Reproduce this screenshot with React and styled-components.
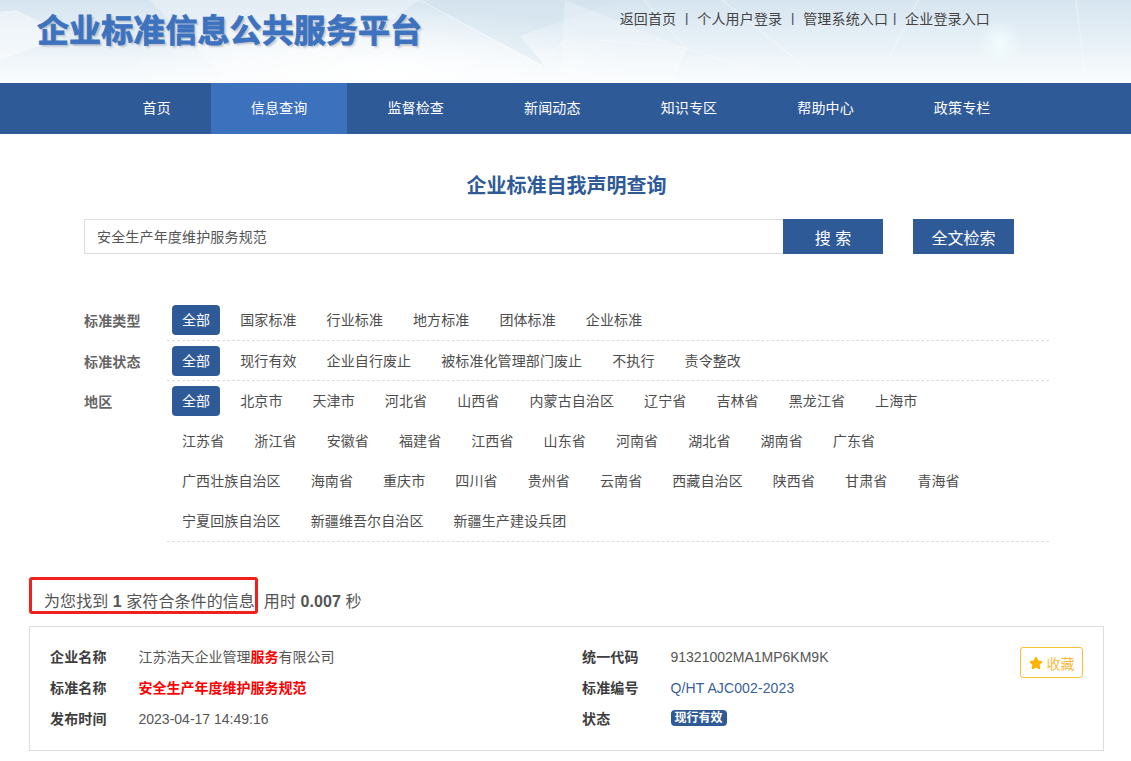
import styled, { createGlobalStyle } from "styled-components";
import { FaStar } from "react-icons/fa";

const GlobalStyle = createGlobalStyle`
  html, body { margin: 0; padding: 0; background: #fff; }
  body {
    font-family: "Liberation Sans", "Noto Sans CJK SC", sans-serif;
    font-size: 14px;
    letter-spacing: 0.15px;
    color: #555;
  }
  * { box-sizing: border-box; }
`;

const navItems = ["首页", "信息查询", "监督检查", "新闻动态", "知识专区", "帮助中心", "政策专栏"];

const filterGroups = [
  { label: "标准类型", lines: [["全部", "国家标准", "行业标准", "地方标准", "团体标准", "企业标准"]] },
  { label: "标准状态", short: true, lines: [["全部", "现行有效", "企业自行废止", "被标准化管理部门废止", "不执行", "责令整改"]] },
  {
    label: "地区",
    lines: [
      ["全部", "北京市", "天津市", "河北省", "山西省", "内蒙古自治区", "辽宁省", "吉林省", "黑龙江省", "上海市"],
      ["江苏省", "浙江省", "安徽省", "福建省", "江西省", "山东省", "河南省", "湖北省", "湖南省", "广东省"],
      ["广西壮族自治区", "海南省", "重庆市", "四川省", "贵州省", "云南省", "西藏自治区", "陕西省", "甘肃省", "青海省"],
      ["宁夏回族自治区", "新疆维吾尔自治区", "新疆生产建设兵团"],
    ],
  },
];

function HeaderArt() {
  return (
    <Art viewBox="0 0 1131 83" preserveAspectRatio="none">
      <defs>
        <radialGradient id="glow">
          <stop offset="0%" stopColor="#f2fdfd" stopOpacity="0.95" />
          <stop offset="100%" stopColor="#f2fdfd" stopOpacity="0" />
        </radialGradient>
      </defs>
      <polygon points="420,0 620,0 520,36 545,66" fill="#cfe0ec" opacity="0.35" />
      <polygon points="0,12 15,10 70,35 0,60" fill="#fff" opacity="0.45" />
      <polygon points="150,0 420,0 300,83 230,83" fill="#fff" opacity="0.3" />
      <polygon points="565,0 686,48 671,83 560,83" fill="#fff" opacity="0.25" />
      <g stroke="#fff" strokeWidth="1.2" fill="none" opacity="0.4">
        <path d="M420 0 L541 66 L565 40" />
        <path d="M644 0 L686 48 L671 83" />
        <path d="M600 40 L686 48 L790 83" />
        <path d="M722 0 L803 65" />
        <path d="M918 0 L888 60" />
        <path d="M1076 0 L1086 83" />
      </g>
      <circle cx="1000" cy="44" r="22" fill="url(#glow)" />
    </Art>
  );
}

export default function App() {
  return (
    <>
      <GlobalStyle />
      <Header>
        <HeaderArt />
        <Logo>企业标准信息公共服务平台</Logo>
        <TopLinks>
          <TopLink>返回首页</TopLink>
          <Sep>|</Sep>
          <TopLink>个人用户登录</TopLink>
          <Sep>|</Sep>
          <TopLink>管理系统入口</TopLink>
          <Sep $tight>|</Sep>
          <TopLink>企业登录入口</TopLink>
        </TopLinks>
      </Header>

      <Nav>
        {navItems.map((item) => (
          <NavItem key={item} $active={item === "信息查询"}>{item}</NavItem>
        ))}
      </Nav>

      <Main>
        <Title>企业标准自我声明查询</Title>
        <SearchBar>
          <SearchInput defaultValue="安全生产年度维护服务规范" />
          <SearchButton>搜 索</SearchButton>
          <FullTextButton>全文检索</FullTextButton>
        </SearchBar>

        <Filters>
          {filterGroups.map((group) => (
            <FilterRow key={group.label}>
              <FilterLabel>{group.label}</FilterLabel>
              <FilterBody>
                {group.lines.map((line) => (
                  <FilterLine key={line[0] + line[1]} $short={group.short}>
                    {line.map((opt) => (
                      <Option key={opt} $active={opt === "全部"}>{opt}</Option>
                    ))}
                  </FilterLine>
                ))}
              </FilterBody>
            </FilterRow>
          ))}
        </Filters>

        <ResultLine>
          <Highlight />
          为您找到 <b>1</b> 家符合条件的信息 &nbsp;用时 <b>0.007</b> 秒
        </ResultLine>

        <Card>
          <CardColumn>
            <InfoRow>
              <InfoLabel>企业名称</InfoLabel>
              <InfoValue>江苏浩天企业管理<Red>服务</Red>有限公司</InfoValue>
            </InfoRow>
            <InfoRow>
              <InfoLabel>标准名称</InfoLabel>
              <InfoValue><Red>安全生产年度维护服务规范</Red></InfoValue>
            </InfoRow>
            <InfoRow>
              <InfoLabel>发布时间</InfoLabel>
              <InfoValue $latin>2023-04-17 14:49:16</InfoValue>
            </InfoRow>
          </CardColumn>
          <CardColumn>
            <InfoRow>
              <InfoLabel>统一代码</InfoLabel>
              <InfoValue $latin>91321002MA1MP6KM9K</InfoValue>
            </InfoRow>
            <InfoRow>
              <InfoLabel>标准编号</InfoLabel>
              <InfoValue $latin $link>Q/HT AJC002-2023</InfoValue>
            </InfoRow>
            <InfoRow>
              <InfoLabel>状态</InfoLabel>
              <Badge>现行有效</Badge>
            </InfoRow>
          </CardColumn>
          <Collect><FaStar size={14} color="#fdb400" />收藏</Collect>
        </Card>
      </Main>
    </>
  );
}

const Header = styled.header`
  position: relative;
  height: 83px;
  display: flex;
  justify-content: space-between;
  align-items: flex-start;
  padding: 0 141px 0 37px;
  overflow: hidden;
  background:
    radial-gradient(ellipse 260px 70px at 380px 75px, #fff 0%, rgba(255, 255, 255, 0) 100%),
    linear-gradient(180deg, #d7e5f0 0%, #e5eff6 45%, #fbfdfe 100%);
`;

const Art = styled.svg`
  position: absolute;
  left: 0;
  top: 0;
  width: 100%;
  height: 100%;
`;

const Logo = styled.h1`
  position: relative;
  margin: 12px 0 0;
  font-size: 32px;
  line-height: 38px;
  font-weight: 700;
  letter-spacing: 0.1px;
  color: #3d72bf;
  -webkit-text-stroke: 0.8px #3d72bf;
  text-shadow: 2px 2px 2px rgba(60, 70, 90, 0.28);
  white-space: nowrap;
`;

const TopLinks = styled.div`
  position: relative;
  display: flex;
  align-items: center;
  height: 35px;
  color: #444;
`;

const TopLink = styled.a`
  color: #444;
  cursor: pointer;
`;

const Sep = styled.span`
  width: ${(p) => (p.$tight ? "17px" : "21px")};
  padding-left: ${(p) => (p.$tight ? "5px" : "0")};
  text-align: ${(p) => (p.$tight ? "left" : "center")};
  font-size: 13px;
  color: #445;
`;

const Nav = styled.nav`
  display: flex;
  height: 51px;
  padding-left: 102.5px;
  background: #2f5a98;
`;

const NavItem = styled.a`
  padding: 0 40px;
  line-height: 51px;
  font-size: 14px;
  color: #fff;
  background: ${(p) => (p.$active ? "#3c71bd" : "transparent")};
  cursor: pointer;
`;

const Main = styled.main`
  padding: 37px 27px 10px 29px;
`;

const Title = styled.h2`
  margin: 0;
  font-size: 20px;
  line-height: 30px;
  font-weight: 700;
  letter-spacing: 0;
  color: #2f5a98;
  text-align: center;
`;

const SearchBar = styled.div`
  display: flex;
  height: 35px;
  margin: 18px 0 0 55px;
`;

const SearchInput = styled.input`
  width: 699px;
  height: 35px;
  padding: 0 12px 2px;
  border: 1px solid #ddd;
  border-right: none;
  outline: none;
  font: inherit;
  letter-spacing: 0.17px;
  color: #555;
`;

const SearchButton = styled.button`
  width: 100px;
  height: 35px;
  padding: 0;
  border: none;
  background: #2f5a98;
  color: #fff;
  font: inherit;
  font-size: 16px;
`;

const FullTextButton = styled(SearchButton)`
  width: 101px;
  margin-left: 30px;
`;

const Filters = styled.div`
  margin: 46px 55px 0 55px;
`;

const FilterRow = styled.div`
  display: flex;
`;

const FilterLabel = styled.div`
  width: 83px;
  flex: none;
  padding-top: 5px;
  line-height: 32px;
  font-weight: 700;
  color: #666;
`;

const FilterBody = styled.div`
  flex: 1;
  padding: 0 0 0 5px;
  border-bottom: 1px dashed #ddd;
`;

const FilterLine = styled.div`
  display: flex;
  gap: 10px;
  height: ${(p) => (p.$short ? "39px" : "40px")};
  padding-top: 5px;
`;

const Option = styled.a`
  height: 30px;
  padding: 0 10px;
  border-radius: 4px;
  line-height: 30px;
  letter-spacing: 0.1px;
  white-space: nowrap;
  color: ${(p) => (p.$active ? "#fff" : "#4d4d4d")};
  background: ${(p) => (p.$active ? "#2f5a98" : "transparent")};
  cursor: pointer;
`;

const ResultLine = styled.div`
  position: relative;
  margin-top: 48px;
  padding-left: 15px;
  font-size: 16px;
  line-height: 24px;
  letter-spacing: 0.07px;
  color: #555;
`;

const Highlight = styled.span`
  position: absolute;
  left: 0;
  top: -13px;
  width: 229px;
  height: 37px;
  border: 3px solid #f0201a;
  border-radius: 3px;
`;

const Card = styled.section`
  position: relative;
  display: grid;
  grid-template-columns: 532px 1fr;
  height: 125px;
  margin-top: 12px;
  padding: 13px 20px;
  border: 1px solid #ddd;
`;

const CardColumn = styled.div`
  min-width: 0;
`;

const InfoRow = styled.div`
  display: flex;
  align-items: center;
  height: 31px;
`;

const InfoLabel = styled.span`
  width: 88.5px;
  font-weight: 700;
  color: #3d3d3d;
`;

const InfoValue = styled.span`
  padding-top: ${(p) => (p.$latin ? "2px" : "0")};
  letter-spacing: ${(p) => (p.$link ? "0.12px" : "0")};
  color: ${(p) => (p.$link ? "#3a6098" : "#555")};
`;

const Red = styled.span`
  color: #f00;
  font-weight: 700;
`;

const Badge = styled.span`
  height: 16px;
  padding: 0 4px;
  border-radius: 4px;
  background: #2f5a98;
  color: #fff;
  font-size: 12px;
  font-weight: 700;
  letter-spacing: 0;
  line-height: 16px;
`;

const Collect = styled.button`
  position: absolute;
  top: 20px;
  right: 20px;
  display: flex;
  align-items: center;
  justify-content: center;
  gap: 4px;
  width: 63px;
  height: 31px;
  padding: 0;
  border: 1px solid #fbc02d;
  border-radius: 3px;
  background: #fff;
  color: #f6bb42;
  font: inherit;
`;
